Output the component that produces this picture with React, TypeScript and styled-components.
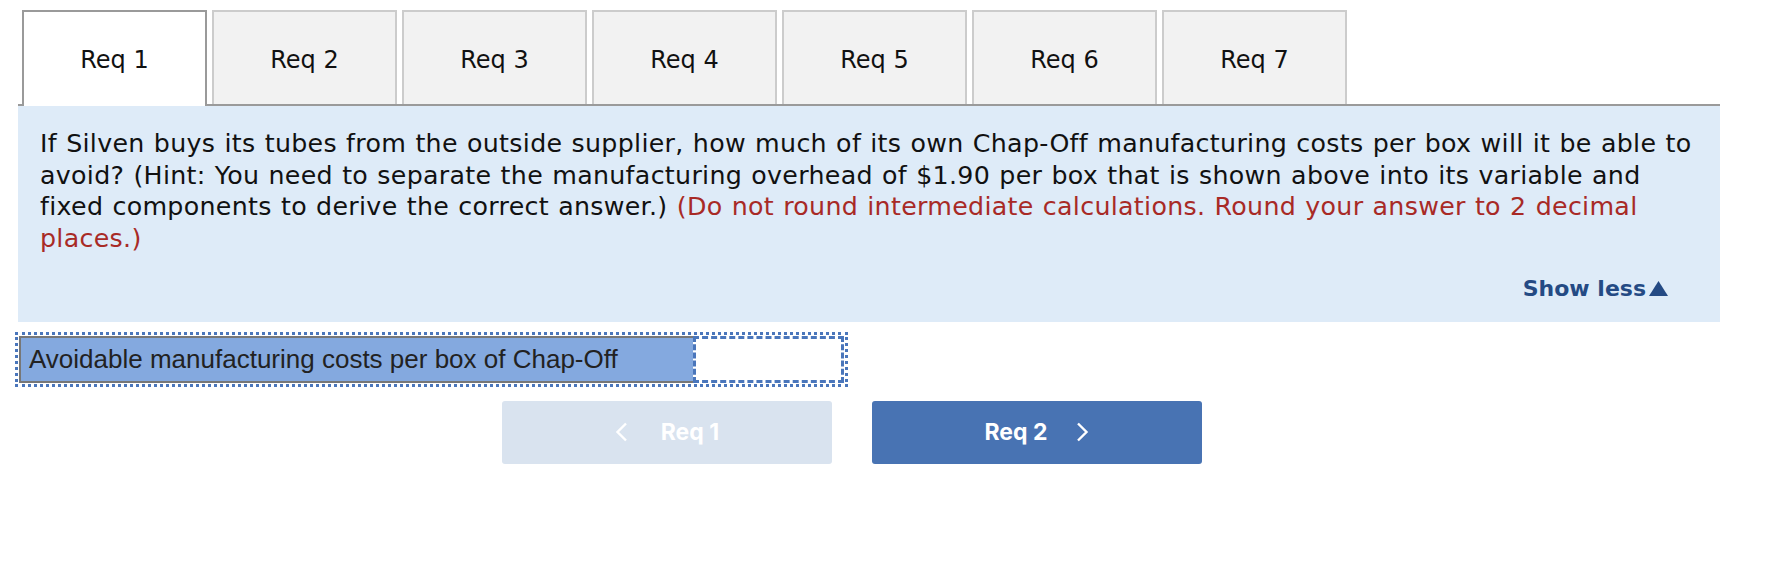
import React from "react";
import styled, { createGlobalStyle } from "styled-components";

const GlobalStyle = createGlobalStyle`
  body {
    margin: 0;
    background: #ffffff;
    font-family: "DejaVu Sans", Verdana, sans-serif;
  }
`;

const tabs = ["Req 1", "Req 2", "Req 3", "Req 4", "Req 5", "Req 6", "Req 7"];

const Page = styled.main`
  width: 1702px;
  padding: 10px 0 0 18px;
`;

const TabBar = styled.nav`
  display: flex;
  gap: 5px;
  padding-left: 4px;
  border-bottom: 2px solid #9a9a9a;
`;

const Tab = styled.div<{ $active?: boolean }>`
  box-sizing: border-box;
  width: 185px;
  height: ${(p) => (p.$active ? "96px" : "94px")};
  margin-bottom: ${(p) => (p.$active ? "-2px" : "0")};
  display: flex;
  align-items: center;
  justify-content: center;
  padding-top: 4px;
  padding-bottom: ${(p) => (p.$active ? "2px" : "0")};
  border: 2px solid ${(p) => (p.$active ? "#9a9a9a" : "#cccccc")};
  border-bottom: none;
  background: ${(p) => (p.$active ? "#ffffff" : "#f2f2f2")};
  font-size: 24px;
  color: #111;
`;

const Panel = styled.section`
  background: #deebf8;
  padding: 22px 22px 17px 22px;
`;

const Question = styled.p`
  margin: 0;
  font-size: 25.3px;
  line-height: 31.7px;
  letter-spacing: 0.3px;
  word-spacing: 0.85px;
  color: #111;
`;

const Note = styled.span`
  color: #a82a26;
`;

const ShowLess = styled.div`
  display: flex;
  justify-content: flex-end;
  align-items: center;
  gap: 3px;
  margin-top: 18px;
  padding-right: 30px;
  font-size: 22px;
  line-height: 31.7px;
  font-weight: bold;
  color: #244a84;
`;

const AnswerRow = styled.div`
  display: flex;
  width: 825px;
  margin: 10px 0 0 -3px;
  border: 3px dotted #4a76bb;
  padding: 1px;
`;

const Label = styled.div`
  box-sizing: border-box;
  width: 674px;
  height: 47px;
  display: flex;
  align-items: center;
  padding-left: 8px;
  background: #84a9df;
  border: 2px solid #777;
  border-right: none;
  font-family: "Liberation Sans", Arial, sans-serif;
  font-size: 26px;
  color: #222;
`;

const Input = styled.div`
  box-sizing: border-box;
  flex: 1;
  height: 47px;
  background: #fff;
  border: 3px dashed #4a76bb;
`;

const NavRow = styled.div`
  display: flex;
  gap: 40px;
  margin: 14px 0 0 484px;
`;

const NavButton = styled.button<{ $primary?: boolean }>`
  width: 330px;
  height: 63px;
  display: flex;
  align-items: center;
  justify-content: center;
  gap: ${(p) => (p.$primary ? "29px" : "33px")};
  border: none;
  border-radius: 3px;
  background: ${(p) => (p.$primary ? "#4873b3" : "#d9e3ef")};
  color: #fff;
  font-family: Inter, "Liberation Sans", sans-serif;
  font-size: 23px;
  font-weight: 700;
`;

const Chevron: React.FC<{ dir: "left" | "right" }> = ({ dir }) => (
  <svg width="13" height="20" viewBox="0 0 13 20" fill="none">
    <polyline
      points={dir === "left" ? "11,1.5 2.5,10 11,18.5" : "2,1.5 10.5,10 2,18.5"}
      stroke="#fff"
      strokeWidth="2.4"
    />
  </svg>
);

const UpTriangle = () => (
  <svg width="19" height="15" viewBox="0 0 19 15">
    <polygon points="9.5,0 19,15 0,15" fill="#244a84" />
  </svg>
);

export default function App() {
  return (
    <Page>
      <GlobalStyle />
      <TabBar>
        {tabs.map((t, i) => (
          <Tab key={t} $active={i === 0}>
            {t}
          </Tab>
        ))}
      </TabBar>
      <Panel>
        <Question>
          If Silven buys its tubes from the outside supplier, how much of its own Chap-Off manufacturing costs per box
          will it be able to avoid? (Hint: You need to separate the manufacturing overhead of $1.90 per box that is
          shown above into its variable and fixed components to derive the correct answer.){" "}
          <Note>(Do not round intermediate calculations. Round your answer to 2 decimal places.)</Note>
        </Question>
        <ShowLess>
          Show less
          <UpTriangle />
        </ShowLess>
      </Panel>
      <AnswerRow>
        <Label>Avoidable manufacturing costs per box of Chap-Off</Label>
        <Input />
      </AnswerRow>
      <NavRow>
        <NavButton>
          <Chevron dir="left" />
          Req 1
        </NavButton>
        <NavButton $primary>
          Req 2
          <Chevron dir="right" />
        </NavButton>
      </NavRow>
    </Page>
  );
}
